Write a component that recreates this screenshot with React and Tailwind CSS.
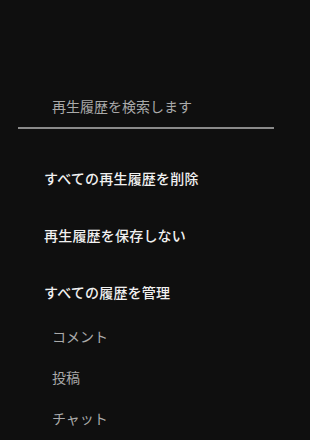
import React from 'react';

const mainItems = ['すべての再生履歴を削除', '再生履歴を保存しない', 'すべての履歴を管理'];
const subItems = ['コメント', '投稿', 'チャット'];

const App = () => {
  return (
    <div
      className="w-full h-[440px] overflow-hidden bg-[#0f0f0f] text-[14px]"
      style={{ fontFamily: '"Noto Sans CJK JP", "Noto Sans", sans-serif' }}
    >
      <div className="pt-[94px] ml-[18px] w-[256px]">
        <div className="pb-[9px] border-b-2 border-[#8a8a8a]">
          <div className="h-[24px] leading-[24px] pl-[34px] text-[#aaaaaa]">再生履歴を検索します</div>
        </div>
      </div>
      <nav className="mt-[37px] pl-[44px] flex flex-col gap-[33px]">
        {mainItems.map((t) => (
          <div key={t} className="h-[24px] leading-[24px] font-medium tracking-[0.2px] text-[#f1f1f1]">{t}</div>
        ))}
      </nav>
      <div className="mt-[20px] pl-[52px] flex flex-col gap-[17px]">
        {subItems.map((t) => (
          <div key={t} className="h-[24px] leading-[24px] text-[#aaaaaa]">{t}</div>
        ))}
      </div>
    </div>
  );
};

export default App;
